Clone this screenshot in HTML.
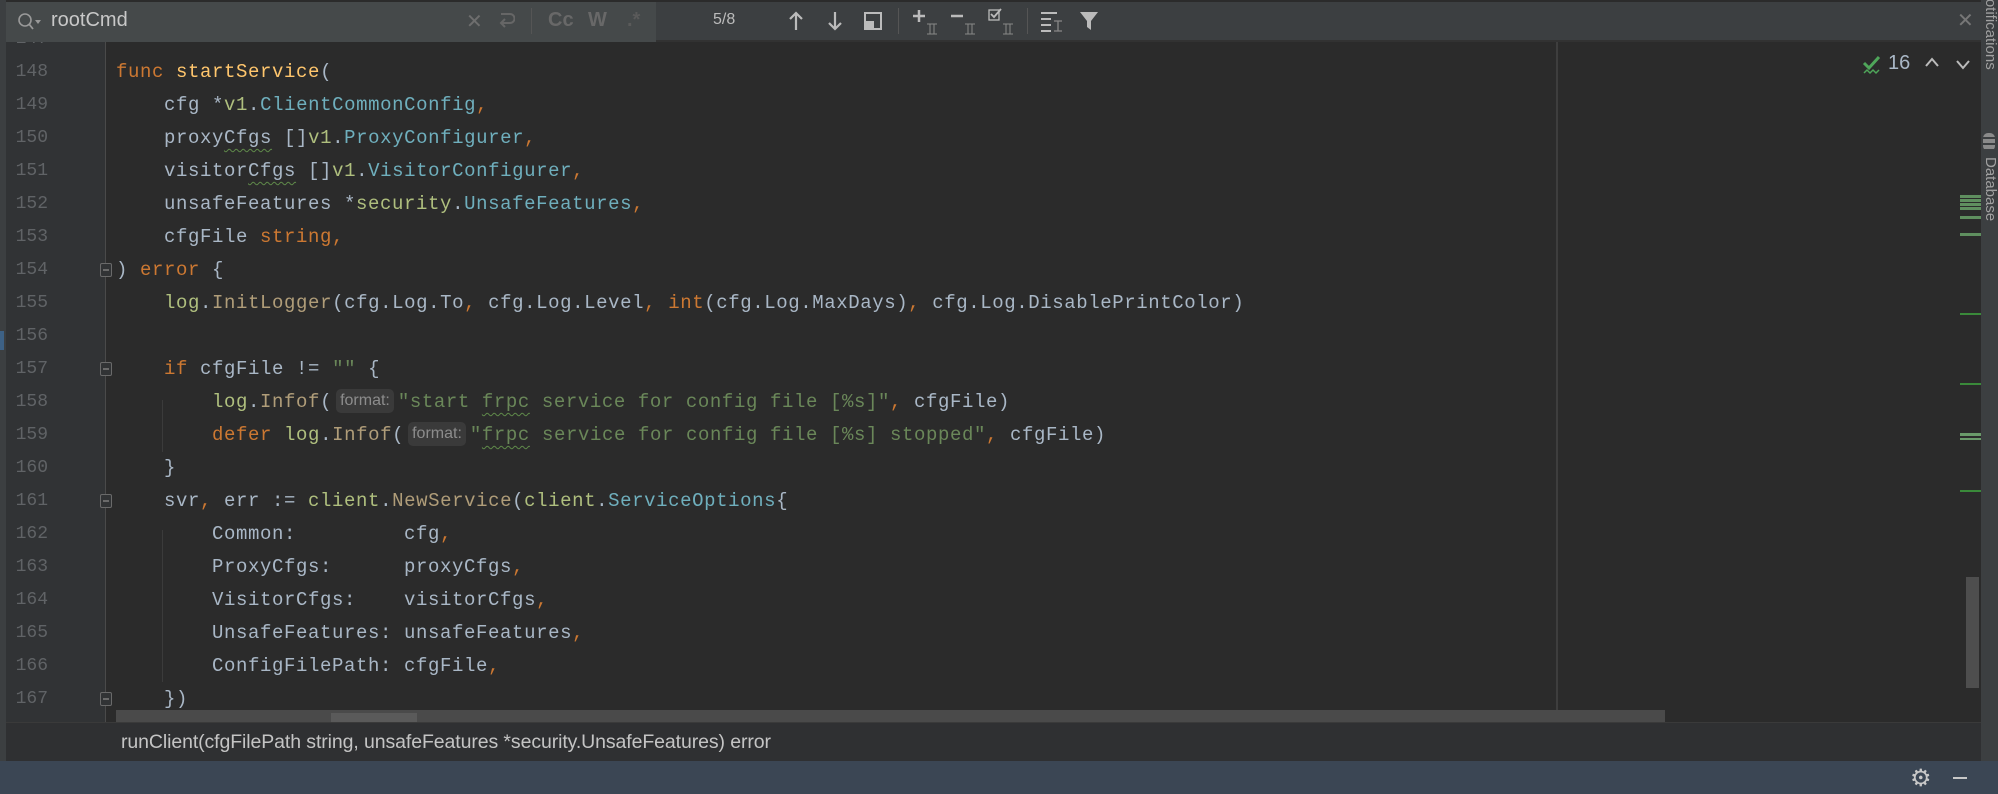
<!DOCTYPE html>
<html><head><meta charset="utf-8"><style>
*{margin:0;padding:0;box-sizing:border-box}
body{width:1998px;height:794px;overflow:hidden;background:#2b2b2b;position:relative;font-family:"Liberation Sans",sans-serif}
.abs{position:absolute}
#left{left:0;top:0;width:6px;height:761px;background:#3c3f41}
#gut{left:6px;top:42px;width:100px;height:680px;background:#313335;border-right:1px solid #4a4a4a}
#editor{left:107px;top:42px;width:1874px;height:680px;background:#2b2b2b}
#code{left:0;top:0;width:1981px;height:722px;overflow:hidden}
.ln{position:absolute;left:6px;width:42px;text-align:right;color:#606366;font:18px "Liberation Mono",monospace;line-height:33px}
.cl{position:absolute;left:116px;white-space:pre;font:19px "Liberation Mono",monospace;letter-spacing:0.6px;line-height:33px;color:#a9b7c6}
.k{color:#cc7832}.f{color:#ffc66d}.t{color:#6fafbd}.p{color:#afbf7e}.m{color:#b09d79}.s{color:#6a8759}
.w{text-decoration:underline wavy #5f8a4a;text-underline-offset:5px;text-decoration-thickness:1px}
.h{display:inline-block;background:#3a3a3a;color:#8c8c8c;font:16px "Liberation Sans",sans-serif;letter-spacing:0;border-radius:5px;padding:0 4px;line-height:24px;margin:0 4px;vertical-align:2px}
.fold{position:absolute;left:100px;width:12px;height:14px;border:1.5px solid #6a6a6a;border-radius:2px;background:#313335}
.fold:after{content:"";position:absolute;left:2px;top:5px;width:6px;height:1.5px;background:#6a6a6a}
.guide{position:absolute;width:1px;background:#3b3b3b}
#top{left:0;top:0;width:1981px;height:42px;background:#3c3f41;border-top:2px solid #2b2b2b;border-bottom:2px solid #323232}
#field{left:6px;top:0;width:650px;height:40px;background:#45494a}
.ic{position:absolute;color:#6e6e6e;font-size:20px;top:9px}
#doc{left:0;top:722px;width:1998px;height:39px;background:#2f3032;border-top:1px solid #3a3a3a}
#status{left:0;top:761px;width:1998px;height:33px;background:#3b4654}
#rs{left:1981px;top:0;width:17px;height:761px;background:#3c3f41}
</style></head><body>
<div id="code" class="abs">
<div id="editor" class="abs"></div>
<div id="gut" class="abs"></div>
<div class="abs" style="left:1556px;top:42px;width:2px;height:680px;background:#3e3e3e"></div>
<div class="ln" style="top:23px">147</div>
<div class="ln" style="top:56px">148</div>
<div class="ln" style="top:89px">149</div>
<div class="ln" style="top:122px">150</div>
<div class="ln" style="top:155px">151</div>
<div class="ln" style="top:188px">152</div>
<div class="ln" style="top:221px">153</div>
<div class="ln" style="top:254px">154</div>
<div class="ln" style="top:287px">155</div>
<div class="ln" style="top:320px">156</div>
<div class="ln" style="top:353px">157</div>
<div class="ln" style="top:386px">158</div>
<div class="ln" style="top:419px">159</div>
<div class="ln" style="top:452px">160</div>
<div class="ln" style="top:485px">161</div>
<div class="ln" style="top:518px">162</div>
<div class="ln" style="top:551px">163</div>
<div class="ln" style="top:584px">164</div>
<div class="ln" style="top:617px">165</div>
<div class="ln" style="top:650px">166</div>
<div class="ln" style="top:683px">167</div>
<div class="fold" style="top:263px"></div>
<div class="fold" style="top:362px"></div>
<div class="fold" style="top:494px"></div>
<div class="fold" style="top:692px"></div>
<div class="guide" style="left:162px;top:400px;height:52px"></div>
<div class="guide" style="left:162px;top:530px;height:152px"></div>
<div class="cl" style="top:56px"><span class="k">func</span> <span class="f">startService</span>(</div>
<div class="cl" style="top:89px">    cfg *<span class="p">v1</span>.<span class="t">ClientCommonConfig</span><span class="k">,</span></div>
<div class="cl" style="top:122px">    proxy<span class="w">Cfgs</span> []<span class="p">v1</span>.<span class="t">ProxyConfigurer</span><span class="k">,</span></div>
<div class="cl" style="top:155px">    visitor<span class="w">Cfgs</span> []<span class="p">v1</span>.<span class="t">VisitorConfigurer</span><span class="k">,</span></div>
<div class="cl" style="top:188px">    unsafeFeatures *<span class="p">security</span>.<span class="t">UnsafeFeatures</span><span class="k">,</span></div>
<div class="cl" style="top:221px">    cfgFile <span class="k">string,</span></div>
<div class="cl" style="top:254px">) <span class="k">error</span> {</div>
<div class="cl" style="top:287px">    <span class="p">log</span>.<span class="m">InitLogger</span>(cfg.Log.To<span class="k">,</span> cfg.Log.Level<span class="k">,</span> <span class="k">int</span>(cfg.Log.MaxDays)<span class="k">,</span> cfg.Log.DisablePrintColor)</div>
<div class="cl" style="top:353px">    <span class="k">if</span> cfgFile != <span class="s">""</span> {</div>
<div class="cl" style="top:386px">        <span class="p">log</span>.<span class="m">Infof</span>(<span class="h">format:</span><span class="s">"start <span class="w">frpc</span> service for config file [%s]"</span><span class="k">,</span> cfgFile)</div>
<div class="cl" style="top:419px">        <span class="k">defer</span> <span class="p">log</span>.<span class="m">Infof</span>(<span class="h">format:</span><span class="s">"<span class="w">frpc</span> service for config file [%s] stopped"</span><span class="k">,</span> cfgFile)</div>
<div class="cl" style="top:452px">    }</div>
<div class="cl" style="top:485px">    svr<span class="k">,</span> err := <span class="p">client</span>.<span class="m">NewService</span>(<span class="p">client</span>.<span class="t">ServiceOptions</span>{</div>
<div class="cl" style="top:518px">        Common:         cfg<span class="k">,</span></div>
<div class="cl" style="top:551px">        ProxyCfgs:      proxyCfgs<span class="k">,</span></div>
<div class="cl" style="top:584px">        VisitorCfgs:    visitorCfgs<span class="k">,</span></div>
<div class="cl" style="top:617px">        UnsafeFeatures: unsafeFeatures<span class="k">,</span></div>
<div class="cl" style="top:650px">        ConfigFilePath: cfgFile<span class="k">,</span></div>
<div class="cl" style="top:683px">    })</div>
<div class="abs" style="left:116px;top:710px;width:1549px;height:12px;background:#4a4a4a"></div>
<div class="abs" style="left:331px;top:713px;width:86px;height:9px;background:#5a5a5a"></div>
<div class="abs" style="left:1966px;top:577px;width:13px;height:111px;background:#4e4e4e"></div>
<div class="abs" style="left:1960px;top:195px;width:21px;height:16px;background:repeating-linear-gradient(#5f8f5f 0 3px,#2b2b2b 3px 4px)"></div>
<div class="abs" style="left:1960px;top:216px;width:21px;height:3px;background:#5f8f5f"></div>
<div class="abs" style="left:1960px;top:233px;width:21px;height:3px;background:#5f8f5f"></div>
<div class="abs" style="left:1960px;top:313px;width:21px;height:2px;background:#3a8a3a"></div>
<div class="abs" style="left:1960px;top:383px;width:21px;height:2px;background:#3a8a3a"></div>
<div class="abs" style="left:1960px;top:433px;width:21px;height:3px;background:#6a9a6a"></div>
<div class="abs" style="left:1960px;top:438px;width:21px;height:2px;background:#6a9a6a"></div>
<div class="abs" style="left:1960px;top:490px;width:21px;height:2px;background:#3a8a3a"></div>
<svg class="abs" style="left:1862px;top:54px" width="22" height="22" viewBox="0 0 22 22"><path d="M2 9 L7 14 L17 3" stroke="#4fa65a" stroke-width="3" fill="none"/><path d="M2 19 l3-3 l3 3 l3-3 l3 3 l3-3" stroke="#4fa65a" stroke-width="1.5" fill="none"/></svg>
<div class="abs" style="left:1888px;top:52px;color:#a9b7c6;font-size:20px">16</div>
<svg class="abs" style="left:1924px;top:56px" width="16" height="12"><path d="M2 10 L8 3 L14 10" stroke="#bbb" stroke-width="2" fill="none"/></svg>
<svg class="abs" style="left:1955px;top:58px" width="16" height="12"><path d="M2 3 L8 10 L14 3" stroke="#bbb" stroke-width="2" fill="none"/></svg>
</div>
<div id="top" class="abs"></div>
<div id="field" class="abs" style="top:2px"></div>
<svg class="abs" style="left:16px;top:11px" width="26" height="22"><circle cx="9" cy="9" r="6" stroke="#999" stroke-width="1.6" fill="none"/><path d="M13 13 L17 18" stroke="#999" stroke-width="1.8"/><path d="M19 9 l3 4 l3-4z" fill="#999"/></svg>
<div class="abs" style="left:51px;top:9px;color:#c8c8c8;font-size:20px">rootCmd</div>
<div class="ic" style="left:466px">✕</div>
<svg class="abs" style="left:497px;top:12px" width="18" height="20"><path d="M4 2 H13 A4 4 0 0 1 13 11 H4 M8 7 L4 11 L8 15" stroke="#666" stroke-width="2" fill="none"/></svg>
<div class="abs" style="left:531px;top:8px;width:1px;height:26px;background:#555"></div>
<div class="ic" style="left:548px;font-weight:bold;color:#686868">Cc</div>
<div class="ic" style="left:588px;font-weight:bold;color:#686868">W</div>
<div class="ic" style="left:627px;font-weight:bold;color:#5a5a5a">.*</div>
<div class="abs" style="left:713px;top:11px;color:#bbb;font-size:16px">5/8</div>
<svg class="abs" style="left:787px;top:10px" width="18" height="22"><path d="M9 20 V3 M3 9 L9 3 L15 9" stroke="#bbb" stroke-width="2.2" fill="none"/></svg>
<svg class="abs" style="left:826px;top:10px" width="18" height="22"><path d="M9 2 V19 M3 13 L9 19 L15 13" stroke="#bbb" stroke-width="2.2" fill="none"/></svg>
<svg class="abs" style="left:864px;top:12px" width="18" height="18"><rect x="1" y="1" width="16" height="16" stroke="#bbb" stroke-width="2" fill="none"/><rect x="1" y="9" width="9" height="8" fill="#bbb"/></svg>
<div class="abs" style="left:898px;top:8px;width:1px;height:26px;background:#555"></div>
<svg class="abs" style="left:912px;top:8px" width="26" height="28"><path d="M7 2 V14 M1 8 H13" stroke="#bbb" stroke-width="2.5"/><path d="M15 16 H25 M15 26 H25 M18 16 V26 M22 16 V26" stroke="#888" stroke-width="1"/></svg>
<svg class="abs" style="left:950px;top:8px" width="26" height="28"><path d="M1 8 H13" stroke="#bbb" stroke-width="2.5"/><path d="M15 16 H25 M15 26 H25 M18 16 V26 M22 16 V26" stroke="#888" stroke-width="1"/></svg>
<svg class="abs" style="left:988px;top:8px" width="26" height="28"><rect x="1" y="2" width="10" height="10" stroke="#bbb" stroke-width="1.3" fill="none"/><path d="M3 6 L6 9 L13 1" stroke="#bbb" stroke-width="1.8" fill="none"/><path d="M15 16 H25 M15 26 H25 M18 16 V26 M22 16 V26" stroke="#888" stroke-width="1"/></svg>
<div class="abs" style="left:1027px;top:8px;width:1px;height:26px;background:#555"></div>
<svg class="abs" style="left:1040px;top:10px" width="24" height="24"><path d="M1 3 H17 M1 9 H11 M1 15 H11 M1 21 H11" stroke="#bbb" stroke-width="2"/><path d="M14 11 H22 M14 21 H22 M18 11 V21" stroke="#888" stroke-width="1.3"/></svg>
<svg class="abs" style="left:1079px;top:10px" width="20" height="22"><path d="M1 2 H19 L12 11 V20 L8 17 V11 Z" fill="#bbb"/></svg>
<div class="abs" style="left:1957px;top:8px;color:#777;font-size:20px">✕</div>
<div id="doc" class="abs"><div style="position:absolute;left:121px;top:8px;color:#c4c4c4;font-size:19.5px;letter-spacing:-0.1px">runClient(cfgFilePath string, unsafeFeatures *security.UnsafeFeatures) error</div></div>
<div id="status" class="abs">
<div style="position:absolute;left:1910px;top:3px;color:#c8c8c8;font-size:24px">⚙</div>
<div style="position:absolute;left:1953px;top:16px;width:14px;height:2px;background:#c8c8c8"></div>
</div>
<div id="left" class="abs"></div>
<div class="abs" style="left:0;top:331px;width:4px;height:19px;background:#3d6185"></div>
<div id="rs" class="abs">
<div style="position:absolute;left:-1px;top:0;width:19px;color:#a0a0a0;font-size:15px;writing-mode:vertical-rl;white-space:nowrap;margin-top:-12px">Notifications</div>
<div style="position:absolute;left:2px;top:133px;width:12px;height:18px;background:repeating-linear-gradient(#8a8a8a 0 4px,#3c3f41 4px 6px);border-radius:5px"></div>
<div style="position:absolute;left:-1px;top:157px;width:19px;color:#a0a0a0;font-size:15px;writing-mode:vertical-rl;white-space:nowrap">Database</div>
</div>
</body></html>
